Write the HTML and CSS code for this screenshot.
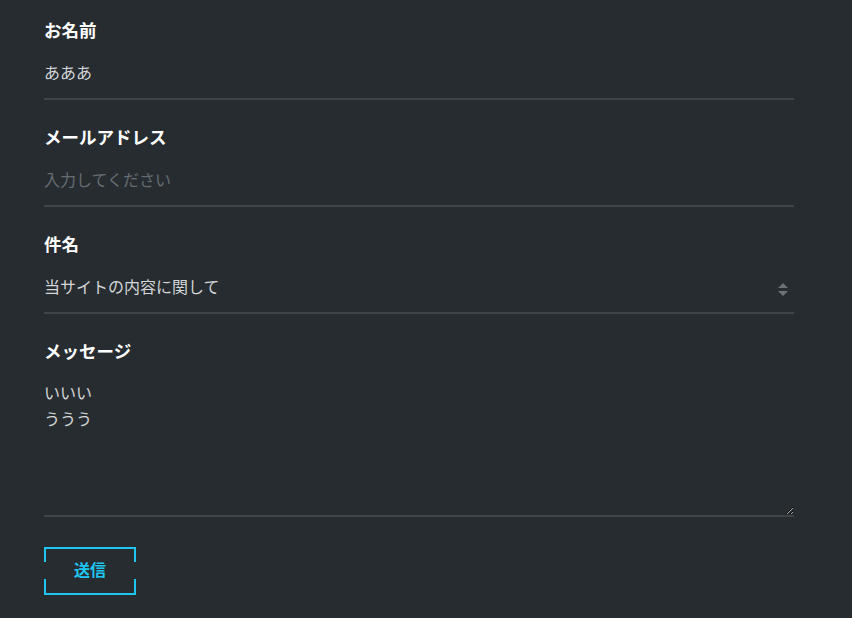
FILE: index.html
```html
<!DOCTYPE html>
<html lang="ja">
<head>
<meta charset="utf-8">
<link rel="stylesheet" href="styles.css">
</head>
<body>
<form class="form">
  <div class="field">
    <label class="label" for="name">お名前</label>
    <input class="control" id="name" type="text" value="あああ">
  </div>
  <div class="field">
    <label class="label" for="email">メールアドレス</label>
    <input class="control" id="email" type="email" placeholder="入力してください">
  </div>
  <div class="field">
    <label class="label" for="subject">件名</label>
    <div class="select-wrap">
      <select class="control select" id="subject">
        <option>当サイトの内容に関して</option>
      </select>
      <svg class="select-arrow" width="10" height="14" viewBox="0 0 10 14"><path d="M5 0 L10 5 L0 5 Z M0 8 L10 8 L5 13 Z" fill="#6b7177"/></svg>
    </div>
  </div>
  <div class="field">
    <label class="label" for="message">メッセージ</label>
    <textarea class="control textarea" id="message">いいい
ううう</textarea>
  </div>
  <button class="submit" type="button">送信</button>
</form>
</body>
</html>
```
FILE: styles.css
```css
html, body {
  margin: 0;
  padding: 0;
  background: #272c30;
}
body {
  font-family: "Noto Sans CJK JP", "Noto Sans", sans-serif;
  color: #fff;
}
.form {
  width: 750px;
  margin-left: 44px;
  padding-top: 18px;
}
.field {
  margin-bottom: 25px;
}
.label {
  display: block;
  font-size: 17.5px;
  font-weight: 700;
  line-height: 24px;
  color: #fff;
}
.control {
  display: block;
  box-sizing: border-box;
  width: 100%;
  margin: 0;
  padding: 18px 0 14px 0;
  border: 0;
  border-bottom: 2px solid #3e4448;
  border-radius: 0;
  background: transparent;
  color: #d4d6d8;
  font-family: inherit;
  font-size: 16px;
  line-height: 24px;
  height: 58px;
  outline: none;
}
.control::placeholder {
  color: #656c72;
}
.select-wrap {
  position: relative;
}
.select {
  -webkit-appearance: none;
  appearance: none;
}
.select-arrow {
  position: absolute;
  right: 6px;
  top: 27px;
  pointer-events: none;
}
.textarea {
  height: 154px;
  padding-top: 17px;
  line-height: 25.6px;
  resize: vertical;
}
.submit {
  position: relative;
  display: block;
  box-sizing: border-box;
  width: 92px;
  height: 48px;
  margin-top: 30px;
  padding: 0 0 4px 0;
  border: 2px solid #1fc6f2;
  background: transparent;
  color: #1fc6f2;
  font-family: inherit;
  font-size: 16px;
  font-weight: 700;
  cursor: pointer;
}
.submit::before,
.submit::after {
  content: "";
  position: absolute;
  top: 13px;
  width: 2px;
  height: 17px;
  background: #272c30;
}
.submit::before { left: -2px; }
.submit::after { right: -2px; }
```
